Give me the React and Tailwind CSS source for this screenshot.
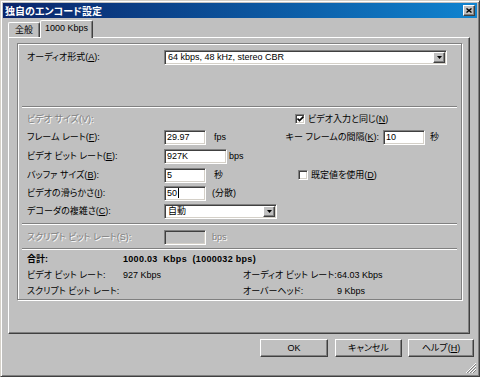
import React from "react";

const sunken =
  "border border-t-[#808080] border-l-[#808080] border-b-white border-r-white shadow-[inset_1px_1px_0_#404040,inset_-1px_-1px_0_#d4d0c8]";
const raised =
  "border border-t-white border-l-white border-r-[#404040] border-b-[#404040] shadow-[inset_-1px_-1px_0_#808080]";
const disabled = "text-[#808080] [text-shadow:1px_1px_0_#fff]";

function Input({ w, value, caret, dis }) {
  return (
    <div
      className={`${sunken} ${dis ? "bg-[#c0c0c0]" : "bg-white"} h-[15px] flex items-center pl-[2px] shrink-0`}
      style={{ width: w }}
    >
      <span>{value}</span>
      {caret && <span className="w-px h-[10px] bg-black ml-px" />}
    </div>
  );
}

function Arrow() {
  return (
    <div className={`${raised} bg-[#c0c0c0] w-[12px] h-[11px] flex items-center justify-center`}>
      <svg width="5" height="3" viewBox="0 0 5 3">
        <path d="M0 0H5L2.5 3Z" fill="#000" />
      </svg>
    </div>
  );
}

function Select({ w, value }) {
  return (
    <div
      className={`${sunken} bg-white h-[15px] flex items-center justify-between pl-[3px] pr-px shrink-0`}
      style={{ width: w }}
    >
      <span>{value}</span>
      <Arrow />
    </div>
  );
}

function Check({ checked }) {
  return (
    <div className={`${sunken} bg-white w-[10px] h-[10px] flex items-center justify-center shrink-0`}>
      {checked && (
        <svg width="7" height="6" viewBox="0 0 7 6">
          <path d="M0.5 2.5L2.5 4.5L6.5 0.5" stroke="#000" strokeWidth="1.6" fill="none" />
        </svg>
      )}
    </div>
  );
}

function Sep() {
  return <div className="mx-[4px] h-[2px] border-t border-t-[#808080] border-b border-b-white" />;
}

function Button({ w, children }) {
  return (
    <div
      className={`${raised} bg-[#c0c0c0] h-[18px] flex items-center justify-center`}
      style={{ width: w }}
    >
      {children}
    </div>
  );
}

export default function App() {
  return (
    <div className="w-[480px] h-[377px] bg-[#c0c0c0] border border-t-[#d4d0c8] border-l-[#d4d0c8] border-r-[#404040] border-b-[#404040] shadow-[inset_1px_1px_0_#fff,inset_-1px_-1px_0_#808080] p-[2px] flex flex-col text-[9px] leading-none text-black font-['Liberation_Sans','Noto_Sans_CJK_JP',sans-serif] [font-feature-settings:'palt'] overflow-hidden">
      {/* title bar */}
      <div className="h-[15px] bg-linear-to-r from-[#0a246a] to-[#1084d0] flex items-center justify-between pl-[2px] pr-[2px] shrink-0">
        <span className="text-white font-bold text-[10px] font-['Noto_Sans_CJK_JP',sans-serif]">独自のエンコード設定</span>
        <div className={`${raised} bg-[#c0c0c0] w-[12px] h-[11px] flex items-center justify-center`}>
          <svg width="6" height="5" viewBox="0 0 6 5">
            <path d="M0.5 0.5L5.5 4.5M5.5 0.5L0.5 4.5" stroke="#000" strokeWidth="1.4" />
          </svg>
        </div>
      </div>

      {/* tabs */}
      <div className="mt-[2px] pl-[5px] h-[18px] flex items-end relative z-10 shrink-0">
        <div className="w-[32px] h-[15px] mb-px border-t border-l border-white border-r border-r-[#404040] shadow-[inset_-1px_0_0_#808080] flex items-center justify-center rounded-t-[2px]">
          全般
        </div>
        <div className="w-[53px] h-[18px] bg-[#c0c0c0] border-t border-l border-white border-r border-r-[#404040] shadow-[inset_-1px_0_0_#808080] flex items-center justify-center pb-[2px] rounded-t-[2px]">
          1000 Kbps
        </div>
      </div>

      {/* panel */}
      <div className="-mt-px ml-[5px] w-[462px] h-[297px] border-t border-l border-white border-r border-b border-r-[#404040] border-b-[#404040] shadow-[inset_-1px_-1px_0_#808080] pt-[5px] pl-[8px] shrink-0">
        <div className="w-[445px] h-[257px] border border-[#808080] shadow-[1px_1px_0_#fff,inset_1px_1px_0_#fff] flex flex-col">
          <div className="mt-[6px] pl-[9px] h-[15px] flex items-center">
            <span className="w-[137px]">オーディオ形式(<u>A</u>):</span>
            <Select w={283} value="64 kbps, 48 kHz, stereo CBR" />
          </div>

          <div className="mt-[41px]">
            <Sep />
          </div>

          <div className="pl-[9px] mt-[2px]">
            <div className="h-[18px] flex items-center">
              <span className={`w-[256px] ${disabled}`}>ビデオ サイズ(V):</span>
              <div className="ml-[12px] flex items-center">
                <Check checked />
                <span className="ml-[3px]">ビデオ入力と同じ(<u>N</u>)</span>
              </div>
            </div>
            <div className="h-[19px] flex items-center">
              <div className="w-[256px] flex items-center">
                <span className="w-[137px]">フレーム レート(<u>F</u>):</span>
                <Input w={42} value="29.97" />
                <span className="ml-[8px]">fps</span>
              </div>
              <span className="w-[96px] text-right">キー フレームの間隔(<u>K</u>):</span>
              <div className="ml-[4px]">
                <Input w={42} value="10" />
              </div>
              <span className="ml-[5px]">秒</span>
            </div>
            <div className="h-[19px] flex items-center">
              <span className="w-[137px]">ビデオ ビット レート(<u>E</u>):</span>
              <Input w={63} value="927K" />
              <span className="ml-[2px]">bps</span>
            </div>
            <div className="h-[18px] flex items-center">
              <div className="w-[256px] flex items-center">
                <span className="w-[137px]">バッファ サイズ(<u>B</u>):</span>
                <Input w={42} value="5" />
                <span className="ml-[8px]">秒</span>
              </div>
              <div className="ml-[15px] flex items-center">
                <Check />
                <span className="ml-[3px]">既定値を使用(<u>D</u>)</span>
              </div>
            </div>
            <div className="h-[18px] flex items-center">
              <span className="w-[137px]">ビデオの滑らかさ(<u>I</u>):</span>
              <Input w={42} value="50" caret />
              <span className="ml-[6px]">(分散)</span>
            </div>
            <div className="h-[18px] flex items-center">
              <span className="w-[137px]">デコーダの複雑さ(<u>C</u>):</span>
              <Select w={113} value="自動" />
            </div>
          </div>

          <div className="mt-[3px]">
            <Sep />
          </div>

          <div className="pl-[9px] mt-[4px] h-[17px] flex items-center">
            <span className={`w-[137px] ${disabled}`}>スクリプト ビット レート(S):</span>
            <Input w={42} value="" dis />
            <span className={`ml-[6px] ${disabled}`}>bps</span>
          </div>

          <div className="mt-[3px]">
            <Sep />
          </div>

          <div className="pl-[9px] mt-px">
            <div className="h-[16px] flex items-center font-bold">
              <span className="w-[96px]">合計:</span>
              <span className="tracking-[0.3px]">1000.03&nbsp; Kbps &nbsp;(1000032 bps)</span>
            </div>
            <div className="h-[16px] flex items-center">
              <span className="w-[96px]">ビデオ ビット レート:</span>
              <span className="w-[120px]">927 Kbps</span>
              <span className="w-[94px]">オーディオ ビット レート:</span>
              <span>64.03 Kbps</span>
            </div>
            <div className="h-[16px] flex items-center">
              <span className="w-[216px]">スクリプト ビット レート:</span>
              <span className="w-[94px]">オーバーヘッド:</span>
              <span>9 Kbps</span>
            </div>
          </div>
        </div>
      </div>

      {/* buttons */}
      <div className="mt-[5px] flex justify-end pr-[3px] shrink-0">
        <Button w={68}>OK</Button>
        <div className="ml-[7px]">
          <Button w={67}>キャンセル</Button>
        </div>
        <div className="ml-[6px]">
          <Button w={66}>
            ヘルプ(<u>H</u>)
          </Button>
        </div>
      </div>

      <div className="flex-1 flex items-end justify-end">
        <svg width="12" height="12" viewBox="0 0 12 12">
          <path d="M11 1L1 11M11 4L4 11M11 7L7 11" stroke="#fff" strokeWidth="1" />
          <path d="M11 2L2 11M11 5L5 11M11 8L8 11" stroke="#808080" strokeWidth="1" />
        </svg>
      </div>
    </div>
  );
}
